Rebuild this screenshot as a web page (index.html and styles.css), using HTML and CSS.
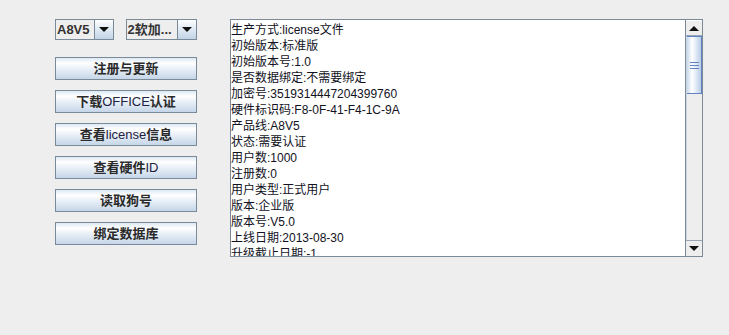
FILE: index.html
```html
<!DOCTYPE html>
<html>
<head>
<meta charset="utf-8">
<link rel="stylesheet" href="styles.css">
</head>
<body>
<div class="app">
  <div class="left">
    <div class="combos">
      <div class="combo c1"><span class="val">A8V5</span><span class="arrow"><i></i></span></div>
      <div class="combo c2"><span class="val">2软加...</span><span class="arrow"><i></i></span></div>
    </div>
    <div class="buttons">
      <div class="btn">注册与更新</div>
      <div class="btn">下载<span class="lat">OFFICE</span>认证</div>
      <div class="btn">查看<span class="lat">license</span>信息</div>
      <div class="btn">查看硬件<span class="lat">ID</span></div>
      <div class="btn">读取狗号</div>
      <div class="btn">绑定数据库</div>
    </div>
  </div>
  <div class="textarea">
    <div class="text">
      <div>生产方式:license文件</div>
      <div>初始版本:标准版</div>
      <div>初始版本号:1.0</div>
      <div>是否数据绑定:不需要绑定</div>
      <div>加密号:3519314447204399760</div>
      <div>硬件标识码:F8-0F-41-F4-1C-9A</div>
      <div>产品线:A8V5</div>
      <div>状态:需要认证</div>
      <div>用户数:1000</div>
      <div>注册数:0</div>
      <div>用户类型:正式用户</div>
      <div>版本:企业版</div>
      <div>版本号:V5.0</div>
      <div>上线日期:2013-08-30</div>
      <div>升级截止日期:-1</div>
    </div>
    <div class="scrollbar">
      <div class="sb-btn up"><i></i></div>
      <div class="sb-track">
        <div class="thumb"><span class="grip"></span></div>
      </div>
      <div class="sb-btn down"><i></i></div>
    </div>
  </div>
</div>
</body>
</html>
```
FILE: styles.css
```css
html, body {
  margin: 0;
  padding: 0;
  background: #eeeeee;
  width: 729px;
  height: 335px;
  overflow: hidden;
  font-family: "Liberation Sans", "Noto Sans CJK SC", sans-serif;
  font-size: 12px;
}
.app {
  display: flex;
  padding: 19px 0 0 55px;
  gap: 33px;
}
.left {
  width: 142px;
  display: flex;
  flex-direction: column;
}
.combos {
  display: flex;
  gap: 12px;
  height: 21px;
}
.combo {
  display: flex;
  border: 1px solid #7a8a99;
  box-sizing: border-box;
  height: 21px;
  background: #eeeeee;
}
.c1 { width: 59px; }
.c2 { width: 72px; }
.combo .val {
  flex: 1;
  padding-left: 1px;
  line-height: 19px;
  color: #333333;
  font-weight: bold;
  font-size: 13px;
  white-space: nowrap;
  overflow: hidden;
}
.combo .arrow {
  width: 18px;
  border-left: 1px solid #7a8a99;
  background: linear-gradient(#ffffff, #e4edf6 40%, #c3d4e6);
  display: flex;
  align-items: center;
  justify-content: center;
}
.combo .arrow i {
  width: 0;
  height: 0;
  border-left: 5px solid transparent;
  border-right: 5px solid transparent;
  border-top: 5px solid #111111;
}
.buttons {
  margin-top: 17px;
  display: flex;
  flex-direction: column;
  gap: 10px;
}
.btn {
  height: 23px;
  box-sizing: border-box;
  border: 1px solid #7a8a99;
  background: linear-gradient(#dde8f3, #ffffff 25%, #eef3f9 45%, #c5d6e8);
  text-align: center;
  line-height: 21px;
  font-weight: bold;
  font-size: 13px;
  color: #2a2a2a;
  white-space: nowrap;
}
.btn .lat {
  font-weight: normal;
  font-size: 13px;
  color: #1e2240;
}
.textarea {
  width: 473px;
  height: 238px;
  box-sizing: border-box;
  border: 1px solid #7a8a99;
  background: #ffffff;
  display: flex;
  overflow: hidden;
}
.text {
  flex: 1;
  padding-top: 2px;
  line-height: 16px;
  color: #111122;
  white-space: nowrap;
  overflow: hidden;
}
.scrollbar {
  width: 16px;
  border-left: 1px solid #7a8a99;
  display: flex;
  flex-direction: column;
  background: #eeeeee;
}
.sb-btn {
  height: 16px;
  box-sizing: border-box;
  background: #eeeeee;
  display: flex;
  align-items: center;
  justify-content: center;
}
.sb-btn.up { border-bottom: 1px solid #99a6b3; border-top: 1px solid #ffffff; }
.sb-btn.down { border-top: 1px solid #99a6b3; }
.sb-btn i {
  width: 0;
  height: 0;
  border-left: 5px solid transparent;
  border-right: 5px solid transparent;
}
.sb-btn.up i { border-bottom: 5px solid #111111; }
.sb-btn.down i { border-top: 5px solid #111111; }
.sb-track {
  flex: 1;
  border-left: 1px solid #c9d6e4;
  background: #eeeeee;
  display: flex;
  flex-direction: column;
}
.thumb {
  height: 58px;
  box-sizing: border-box;
  border: 1px solid #6382bf;
  border-left: none;
  background: linear-gradient(90deg, #c8d8ec, #ffffff 35%, #e6eef8 60%, #b8cde6);
  display: flex;
  align-items: center;
  justify-content: center;
}
.grip {
  width: 9px;
  height: 5px;
  border-top: 1px solid #6382bf;
  border-bottom: 1px solid #6382bf;
  background: linear-gradient(transparent 2px, #6382bf 2px, #6382bf 3px, transparent 3px);
}
```
